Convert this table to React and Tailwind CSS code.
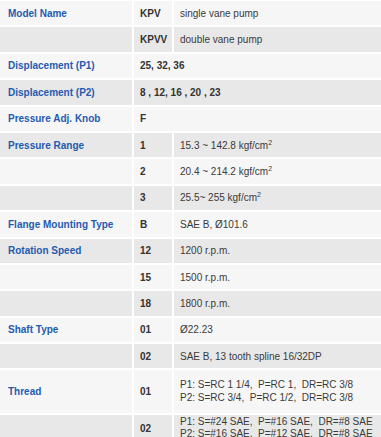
import React from "react";

const rows = [
  { label: "Model Name", code: "KPV", value: "single vane pump" },
  { label: "", code: "KPVV", value: "double vane pump" },
  { label: "Displacement (P1)", code: "25, 32, 36", wide: true },
  { label: "Displacement (P2)", code: "8 , 12, 16 , 20 , 23", wide: true },
  { label: "Pressure Adj. Knob", code: "F", wide: true },
  { label: "Pressure Range", code: "1", value: "15.3 ~ 142.8 kgf/cm", sup: true },
  { label: "", code: "2", value: "20.4 ~ 214.2 kgf/cm", sup: true },
  { label: "", code: "3", value: "25.5~ 255 kgf/cm", sup: true },
  { label: "Flange Mounting Type", code: "B", value: "SAE B, Ø101.6" },
  { label: "Rotation Speed", code: "12", value: "1200 r.p.m." },
  { label: "", code: "15", value: "1500 r.p.m." },
  { label: "", code: "18", value: "1800 r.p.m." },
  { label: "Shaft Type", code: "01", value: "Ø22.23" },
  { label: "", code: "02", value: "SAE B, 13 tooth spline 16/32DP" },
  {
    label: "Thread",
    code: "01",
    height: "h-[45px]",
    lines: [
      "P1: S=RC 1 1/4,  P=RC 1,  DR=RC 3/8",
      "P2: S=RC 3/4,  P=RC 1/2,  DR=RC 3/8",
    ],
  },
  {
    label: "",
    code: "02",
    height: "h-[28px]",
    lines: [
      "P1: S=#24 SAE,  P=#16 SAE,  DR=#8 SAE",
      "P2: S=#16 SAE,  P=#12 SAE,  DR=#8 SAE",
    ],
  },
];

const SpecRow = ({ row, index }) => {
  const bg = index % 2 === 0 ? "bg-[#f6f6f6]" : "bg-[#e8e8e8]";
  const height = row.height || "h-[26.4px]";

  return (
    <div className={`flex border-b-2 border-white ${height}`}>
      <div className={`${bg} w-[132px] shrink-0 flex items-center pl-2 font-bold text-[#1f5bb0]`}>
        {row.label}
      </div>
      <div
        className={`${bg} ${row.wide ? "flex-1" : "w-[38px] shrink-0"} ml-[2px] flex items-center pl-[6px] font-bold text-[#333]`}
      >
        {row.code}
      </div>
      {!row.wide && (
        <div className={`${bg} flex-1 ml-[2px] flex items-center pl-[6px] text-[#3a3a3a]`}>
          {row.lines ? (
            <div className="leading-[12.5px] whitespace-pre">
              {row.lines.map((line) => (
                <div key={line}>{line}</div>
              ))}
            </div>
          ) : (
            <span className="whitespace-pre">
              {row.value}
              {row.sup && <sup className="text-[7px] -top-[4px]">2</sup>}
            </span>
          )}
        </div>
      )}
    </div>
  );
};

export default function App() {
  return (
    <div className="w-[381px] h-[437px] overflow-hidden bg-white pt-px font-['Liberation_Sans',Arial,sans-serif] text-[10px]">
      {rows.map((row, i) => (
        <SpecRow key={i} row={row} index={i} />
      ))}
    </div>
  );
}
